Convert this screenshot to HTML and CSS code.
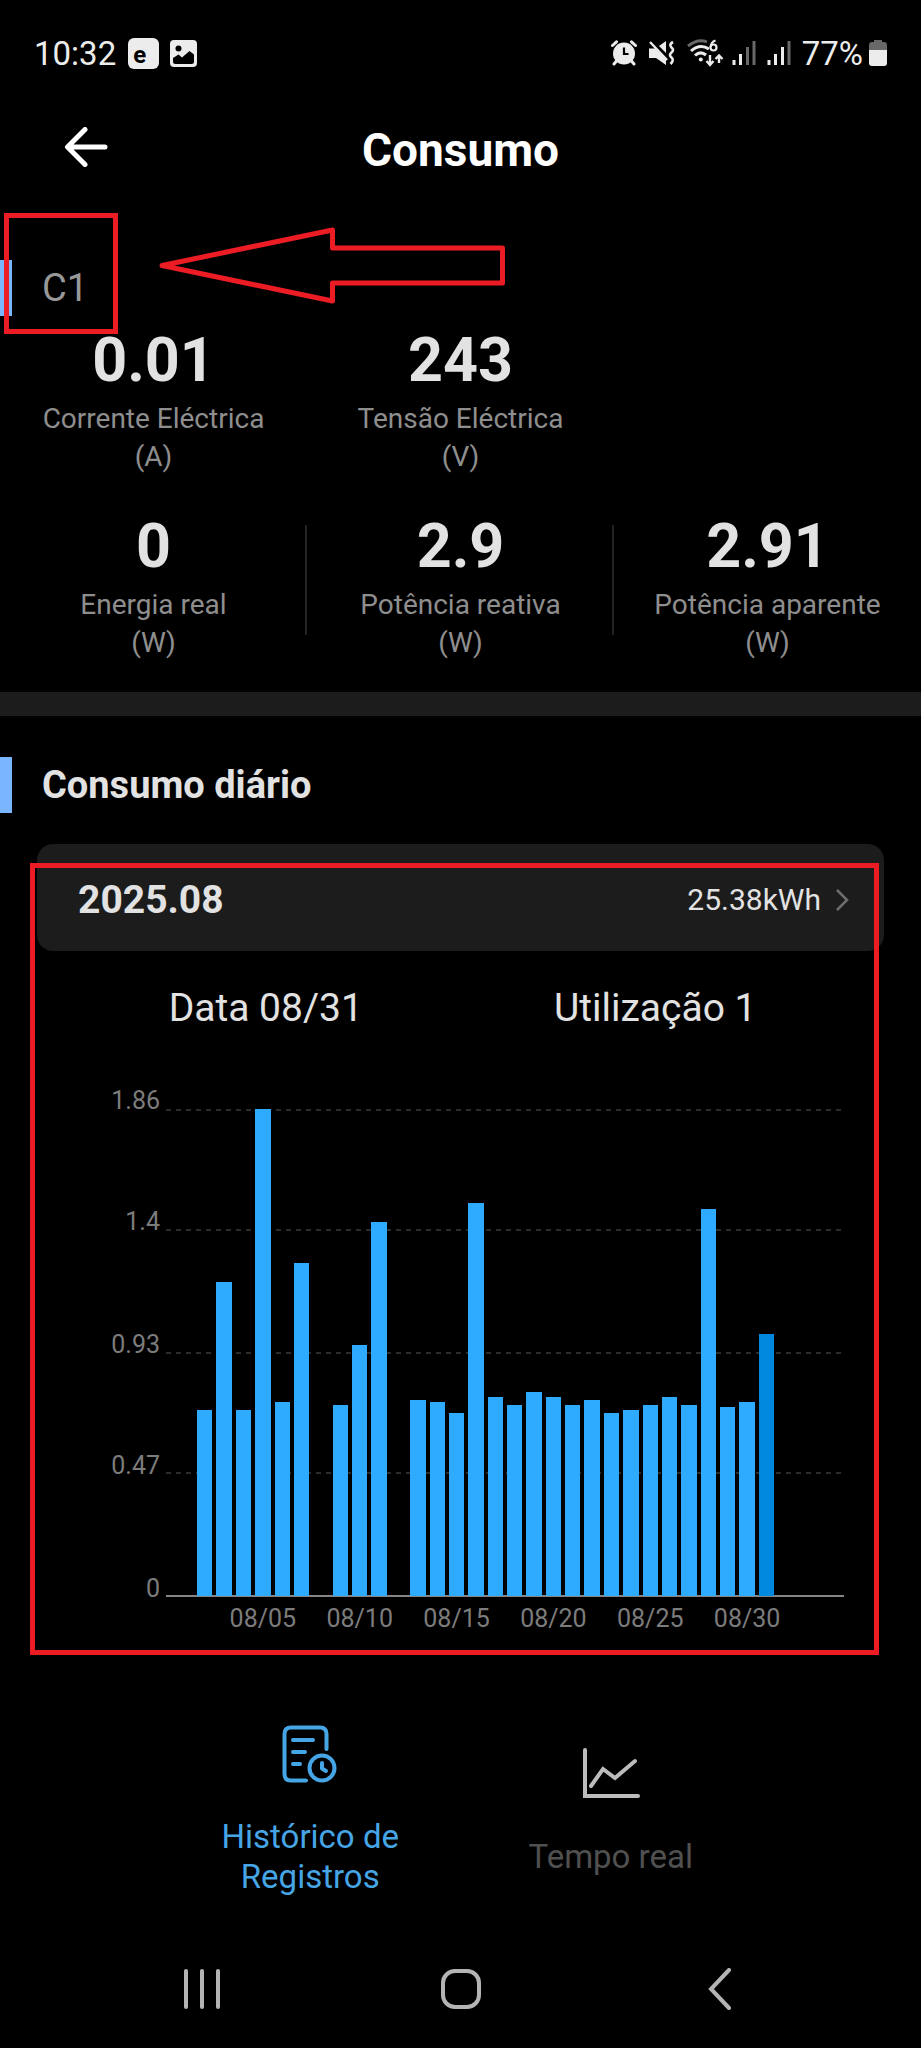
FILE: index.html
```html
<!DOCTYPE html>
<html lang="pt">
<head>
<meta charset="utf-8">
<meta name="viewport" content="width=device-width, initial-scale=1">
<title>Consumo</title>
<link rel="stylesheet" href="styles.css">
</head>
<body>
<div class="status-bar">
  <div class="status-left">
    <span class="clock">10:32</span>
    <span class="app-badge">e</span>
    <svg class="icon-picture" width="27" height="27" viewBox="0 0 27 27" aria-hidden="true">
      <rect width="27" height="27" rx="4" fill="#ececec"/>
      <circle cx="8.500" cy="8.500" r="3" fill="#000"/>
      <path d="M3 21.500 V18 L8.500 14.500 L12 17.500 L19.500 11 L24 14.500 V21.500 Q24 24 21.500 24 H5.500 Q3 24 3 21.500 Z" fill="#000"/>
    </svg>
  </div>
  <div class="status-right">
    <svg width="26" height="26" viewBox="0 0 26 26" aria-hidden="true">
      <circle cx="13" cy="13.500" r="11" fill="#ececec"/>
      <path d="M1.500 5.500 L5.500 1.800 M24.500 5.500 L20.500 1.800 M5.500 21 L3 24 M20.500 21 L23 24" stroke="#ececec" stroke-width="3" stroke-linecap="round"/>
      <path d="M13 7.500 V14 H17.500" fill="none" stroke="#000" stroke-width="2.200"/>
    </svg>
    <svg class="icon-mute" width="27" height="26" viewBox="0 0 27 26" aria-hidden="true">
      <path d="M1 8.500 H7 L18 19 V25 L8 18 H1 Z" fill="#ececec"/>
      <path d="M11 6 L18 1 V13 Z" fill="#ececec"/>
      <path d="M2 2 L19 20" stroke="#ececec" stroke-width="2.400"/>
      <path d="M25 2 q-4.500 2.500 -1.500 5.500 q3 2.500 0 5 q-3 2.500 0 5 q3 2.500 -1 6.500" fill="none" stroke="#ececec" stroke-width="2.600"/>
    </svg>
    <svg class="icon-wifi" width="37" height="28" viewBox="0 0 37 28" aria-hidden="true">
      <path d="M1 7 Q11 -1 20 3" fill="none" stroke="#686868" stroke-width="3"/>
      <path d="M4 12 Q13 4 22 10" fill="none" stroke="#ececec" stroke-width="3"/>
      <path d="M8 16.500 Q13.500 11.500 19 16" fill="none" stroke="#ececec" stroke-width="3"/>
      <circle cx="13.800" cy="20.500" r="2" fill="#ececec"/>
      <path d="M28.500 1.500 Q24 3 23.700 8" fill="none" stroke="#ececec" stroke-width="2.200"/>
      <circle cx="26.500" cy="8.500" r="3" fill="none" stroke="#ececec" stroke-width="2.200"/>
      <path d="M23 16 V25 M19.500 22 L23 26 L26.500 22 M32 24 V17 M28.500 20 L32 16.500 L35.500 20" fill="none" stroke="#ececec" stroke-width="2.400"/>
    </svg>
    <svg class="icon-signal" width="25" height="26" viewBox="0 0 25 26" aria-hidden="true">
      <path d="M2 25 V20 M8.500 25 V14" stroke="#ececec" stroke-width="3"/>
      <path d="M15.500 25 V7 M22 25 V1" stroke="#686868" stroke-width="3"/>
    </svg>
    <svg class="icon-signal" width="25" height="26" viewBox="0 0 25 26" aria-hidden="true">
      <path d="M2 25 V20 M8.500 25 V14 M15.500 25 V7" stroke="#ececec" stroke-width="3"/>
      <path d="M22 25 V1" stroke="#686868" stroke-width="3"/>
    </svg>
    <span class="battery-level">77%</span>
    <svg class="icon-battery" width="18" height="28" viewBox="0 0 18 28" aria-hidden="true">
      <path d="M5 3 V1 H13 V3 H15 Q18 3 18 6 V12 H0 V6 Q0 3 3 3 Z" fill="#686868"/>
      <path d="M0 11 H18 V24 Q18 27 15 27 H3 Q0 27 0 24 Z" fill="#ececec"/>
    </svg>
  </div>
</div>

<header class="app-header">
  <button class="back-button" type="button" aria-label="Voltar">
    <svg width="44" height="40" viewBox="0 0 44 40" aria-hidden="true">
      <path d="M41 20 H4 M21 2.500 L3.500 20 L21 37.500" fill="none" stroke="#fff" stroke-width="5" stroke-linecap="round" stroke-linejoin="round"/>
    </svg>
  </button>
  <h1 class="app-title">Consumo</h1>
</header>

<main>
  <section class="circuit">
    <h2 class="section-title circuit-name">C1</h2>
    <div class="circuit-mark"></div>
    <svg class="arrow-mark" width="347" height="78" viewBox="0 0 347 78" aria-hidden="true">
      <path d="M3 38.500 L173.500 3 V21 H343.500 V56 H173.500 V74 Z" fill="none" stroke="#ec1c24" stroke-width="5" stroke-linejoin="round"/>
    </svg>
    <div class="stats">
      <div class="stat"><strong>0.01</strong><span>Corrente Eléctrica</span><span>(A)</span></div>
      <div class="stat"><strong>243</strong><span>Tensão Eléctrica</span><span>(V)</span></div>
    </div>
    <div class="stats stats-divided">
      <div class="stat"><strong>0</strong><span>Energia real</span><span>(W)</span></div>
      <div class="stat"><strong>2.9</strong><span>Potência reativa</span><span>(W)</span></div>
      <div class="stat"><strong>2.91</strong><span>Potência aparente</span><span>(W)</span></div>
    </div>
  </section>

  <section class="daily">
    <h2 class="section-title">Consumo diário</h2>
    <div class="daily-body">
      <button class="month" type="button">
        <span class="month-name">2025.08</span>
        <span class="month-total">25.38kWh</span>
        <svg width="14" height="24" viewBox="0 0 14 24" aria-hidden="true"><path d="M2 2 L12 12 L2 22" fill="none" stroke="#6e6e6e" stroke-width="2.500"/></svg>
      </button>
      <div class="readout"><span>Data 08/31</span><span>Utilização 1</span></div>
      <div class="chart">
        <div class="y-axis"><span>1.86</span><span>1.4</span><span>0.93</span><span>0.47</span><span>0</span></div>
        <div class="plot">
          <div class="grid-lines"><i></i><i></i><i></i><i></i></div>
          <div class="bars">
            <i></i>
            <i></i>
            <i style="height:38.17%"></i>
            <i style="height:64.52%"></i>
            <i style="height:38.17%"></i>
            <i style="height:100%"></i>
            <i style="height:39.78%"></i>
            <i style="height:68.28%"></i>
            <i></i>
            <i style="height:39.25%"></i>
            <i style="height:51.61%"></i>
            <i style="height:76.88%"></i>
            <i></i>
            <i style="height:40.32%"></i>
            <i style="height:39.78%"></i>
            <i style="height:37.63%"></i>
            <i style="height:80.65%"></i>
            <i style="height:40.86%"></i>
            <i style="height:39.25%"></i>
            <i style="height:41.94%"></i>
            <i style="height:40.86%"></i>
            <i style="height:39.25%"></i>
            <i style="height:40.32%"></i>
            <i style="height:37.63%"></i>
            <i style="height:38.17%"></i>
            <i style="height:39.25%"></i>
            <i style="height:40.86%"></i>
            <i style="height:39.25%"></i>
            <i style="height:79.57%"></i>
            <i style="height:38.71%"></i>
            <i style="height:39.78%"></i>
            <i class="selected" style="height:53.76%"></i>
          </div>
        </div>
        <div class="x-axis"><span>08/05</span><span>08/10</span><span>08/15</span><span>08/20</span><span>08/25</span><span>08/30</span></div>
      </div>
      <div class="chart-mark"></div>
    </div>
  </section>
</main>

<nav class="tabs">
  <a class="tab active" href="#historico">
    <svg width="56" height="58" viewBox="0 0 56 58" aria-hidden="true">
      <path d="M44.500 24 V9 Q44.500 2.500 38 2.500 H9 Q2.500 2.500 2.500 9 V49 Q2.500 55.500 9 55.500 H24" fill="none" stroke="#46a5e5" stroke-width="4" stroke-linecap="round"/>
      <path d="M11 15 H31 M11 27 H23 M11 39 H18" stroke="#46a5e5" stroke-width="4" stroke-linecap="round"/>
      <circle cx="40" cy="43" r="12.500" fill="none" stroke="#46a5e5" stroke-width="4"/>
      <path d="M40 38 V43.500 L44 46" fill="none" stroke="#46a5e5" stroke-width="4" stroke-linecap="round" stroke-linejoin="round"/>
    </svg>
    <span>Histórico de Registros</span>
  </a>
  <a class="tab" href="#tempo-real">
    <svg width="58" height="58" viewBox="0 0 58 58" aria-hidden="true">
      <path d="M3 5 V51 H56" fill="none" stroke="#bcbcbc" stroke-width="4" stroke-linecap="round"/>
      <path d="M9 41 L21 24 L33 33 L53 16" fill="none" stroke="#bcbcbc" stroke-width="4" stroke-linecap="round"/>
    </svg>
    <span>Tempo real</span>
  </a>
</nav>

<div class="system-nav">
  <button type="button" aria-label="Recentes"><svg width="38" height="42" viewBox="0 0 38 42" aria-hidden="true"><path d="M3 3 V39 M19 3 V39 M35 3 V39" stroke="#b4b4b4" stroke-width="4" stroke-linecap="round"/></svg></button>
  <button type="button" aria-label="Início"><svg width="42" height="42" viewBox="0 0 42 42" aria-hidden="true"><rect x="3" y="3" width="36" height="36" rx="12" fill="none" stroke="#b4b4b4" stroke-width="4"/></svg></button>
  <button type="button" aria-label="Voltar"><svg width="24" height="42" viewBox="0 0 24 42" aria-hidden="true"><path d="M21 2 L3 21 L21 40" fill="none" stroke="#b4b4b4" stroke-width="4" stroke-linecap="round"/></svg></button>
</div>
</body>
</html>
```

FILE: styles.css
```css
* {
  box-sizing: border-box;
}

body {
  margin: 0;
  background: #000;
  color: #e2e2e2;
  font-family: Roboto, "Liberation Sans", sans-serif;
}

h1,
h2 {
  margin: 0;
}

button {
  padding: 0;
  border: 0;
  background: none;
  color: inherit;
  font: inherit;
  cursor: pointer;
}

svg {
  display: block;
  flex: none;
}

.status-bar {
  display: flex;
  justify-content: space-between;
  align-items: center;
  height: 106px;
  padding: 0 34px;
  color: #ececec;
  font-size: 33px;
}

.status-left,
.status-right {
  display: flex;
  align-items: center;
}

.app-badge {
  width: 31px;
  height: 31px;
  margin: 0 11px 0 12px;
  padding: 2px 0 0 5px;
  border-radius: 6px;
  background: #ececec;
  color: #000;
  font-size: 24px;
  font-weight: 700;
  line-height: 31px;
}

.icon-mute {
  margin-left: 11px;
}

.icon-wifi {
  margin-left: 12px;
}

.icon-signal {
  margin-left: 8px;
}

.icon-signal + .icon-signal {
  margin-left: 10px;
}

.battery-level {
  margin-left: 10px;
}

.icon-battery {
  margin-left: 6px;
}

.app-header {
  display: grid;
  grid-template-columns: 1fr auto 1fr;
  align-items: center;
  height: 86px;
  padding: 0 64px;
}

.back-button {
  justify-self: start;
  padding-bottom: 4px;
}

.app-title {
  padding-top: 2px;
  color: #fff;
  font-size: 46px;
  font-weight: 700;
  line-height: 56px;
}

.section-title {
  padding-left: 30px;
  border-left: 12px solid #7ab5ff;
  font-size: 38px;
  font-weight: 700;
  line-height: 56px;
}

.circuit {
  position: relative;
  padding: 68px 0 30px;
  border-bottom: 24px solid #1c1c1c;
}

.circuit-name {
  color: #989898;
  font-weight: 400;
}

.circuit-mark {
  position: absolute;
  top: 21px;
  left: 4px;
  width: 114px;
  height: 121px;
  border: 5px solid #ec1c24;
}

.arrow-mark {
  position: absolute;
  top: 35px;
  left: 159px;
}

.stats {
  display: grid;
  grid-template-columns: repeat(3, 1fr);
  margin-top: 4px;
}

.stats-divided {
  margin-top: 30px;
}

.stat {
  display: flex;
  flex-direction: column;
  color: #8e8e8e;
  font-size: 28px;
  line-height: 38px;
  text-align: center;
}

.stat strong {
  color: #e2e2e2;
  font-size: 61px;
  font-weight: 700;
  line-height: 80px;
}

.stats-divided .stat:not(:last-child) {
  background: linear-gradient(#242424, #242424) right 19px / 2px 110px no-repeat;
}

.daily {
  padding-top: 41px;
}

.daily-body {
  position: relative;
  padding: 31px 37px 21px;
}

.month {
  display: flex;
  align-items: center;
  width: 100%;
  height: 107px;
  padding: 4px 35px 0 41px;
  border-radius: 16px;
  background: #1c1c1c;
}

.month-name {
  flex: 1;
  font-size: 39px;
  font-weight: 700;
  text-align: left;
}

.month-total {
  margin-right: 14px;
  font-size: 30px;
}

.readout {
  display: grid;
  grid-template-columns: 1fr 1fr;
  margin-top: 33px;
  padding: 0 34px;
  font-size: 39px;
  line-height: 48px;
  text-align: center;
}

.chart {
  display: grid;
  grid-template: 488px auto / 1fr minmax(0, 678px);
  column-gap: 6px;
  margin-top: 77px;
  padding-right: 40px;
  color: #7c7c7c;
  font-size: 25px;
  line-height: 30px;
}

.y-axis {
  display: grid;
  grid-template-rows: 46fr 47fr 46fr 47fr 0;
  margin-top: -23px;
  margin-bottom: 23px;
  text-align: right;
}

.y-axis span {
  height: 0;
}

.plot {
  display: grid;
  border-bottom: 2px solid #858585;
}

.grid-lines,
.bars {
  grid-area: 1 / 1;
}

.grid-lines {
  display: grid;
  grid-template-rows: 46fr 47fr 46fr 47fr;
}

.grid-lines i {
  background: repeating-linear-gradient(90deg, #2c2c2c 0 5px, transparent 5px 10px) top / 100% 2px no-repeat;
}

.bars,
.x-axis {
  display: grid;
  grid-template-columns: 1fr repeat(34, 2fr) 1fr;
}

.bars {
  align-items: end;
  margin-bottom: -1px;
}

.bars i {
  margin: 0 2px;
  background: #2eabff;
}

.bars .selected {
  background: #0088de;
}

.x-axis {
  grid-column: 2;
  margin-top: 7px;
}

.x-axis span {
  display: flex;
  justify-content: center;
  grid-column: span 5;
}

.x-axis span:first-child {
  grid-column: 4 / span 5;
}

.chart-mark {
  position: absolute;
  inset: 50px 42px 0 30px;
  border: 5px solid #ec1c24;
  pointer-events: none;
}

.tabs {
  display: grid;
  grid-template-columns: 1fr 1fr;
  align-items: center;
  padding: 70px 160px 33px;
}

.tab {
  display: flex;
  flex-direction: column;
  align-items: center;
  gap: 34px;
  padding: 0 50px;
  color: #505050;
  font-size: 33px;
  line-height: 40px;
  text-align: center;
  text-decoration: none;
}

.tab.active {
  color: #46a5e5;
}

.system-nav {
  display: grid;
  grid-template-columns: repeat(3, 1fr);
  height: 118px;
  padding: 0 72px;
}

.system-nav button {
  display: grid;
  place-items: center;
}
```
